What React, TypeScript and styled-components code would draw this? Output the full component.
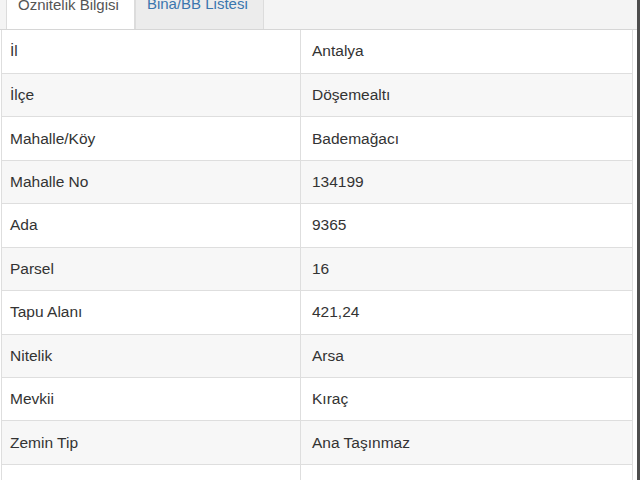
import React, { useState } from 'react'
import styled, { createGlobalStyle } from 'styled-components'

const GlobalStyle = createGlobalStyle`
	html, body {
		margin: 0;
		padding: 0;
		background: #fff;
	}
	body {
		font-family: 'Liberation Sans', Arial, sans-serif;
		color: #333;
	}
`

const rows: [string, string][] = [
	['İl', 'Antalya'],
	['İlçe', 'Döşemealtı'],
	['Mahalle/Köy', 'Bademağacı'],
	['Mahalle No', '134199'],
	['Ada', '9365'],
	['Parsel', '16'],
	['Tapu Alanı', '421,24'],
	['Nitelik', 'Arsa'],
	['Mevkii', 'Kıraç'],
	['Zemin Tip', 'Ana Taşınmaz'],
	['Sıfat', ''],
]

const tabs = ['Öznitelik Bilgisi', 'Bina/BB Listesi']

const App: React.FC = () => {
	const [active, setActive] = useState(0)

	return (
		<Page>
			<GlobalStyle />
			<TabBar>
				{tabs.map((t, i) => (
					<Tab key={t} $active={i === active} onClick={() => setActive(i)}>
						{t}
					</Tab>
				))}
			</TabBar>
			<Table>
				<colgroup>
					<KeyCol />
					<col />
				</colgroup>
				<tbody>
					{rows.map(([k, v], i) => (
						<Row key={k} $striped={i % 2 === 1}>
							<KeyCell>{k}</KeyCell>
							<ValueCell>{v}</ValueCell>
						</Row>
					))}
				</tbody>
			</Table>
		</Page>
	)
}

export default App

const Page = styled.div`
	width: 637px;
	height: 480px;
	overflow: hidden;
	border-right: 3px solid #4d4d4d;
	background: #fff;
`

const TabBar = styled.div`
	display: flex;
	align-items: flex-end;
	height: 29px;
	padding-left: 6px;
	background: #f4f4f4;
	border-bottom: 1px solid #d6d6d6;
	overflow: hidden;
`

const Tab = styled.div<{ $active: boolean }>`
	flex-shrink: 0;
	height: 36px;
	margin-bottom: ${p => (p.$active ? '-1px' : '0')};
	padding: 0 15px 0 11px;
	box-sizing: border-box;
	font-size: 15px;
	line-height: 20px;
	cursor: pointer;
	background: ${p => (p.$active ? '#fff' : '#ececec')};
	color: ${p => (p.$active ? '#555' : '#3a76ae')};
	border: 1px solid #dcdcdc;
	border-bottom: ${p => (p.$active ? '1px solid #fff' : 'none')};
`

const Table = styled.table`
	width: 632px;
	margin-left: 1px;
	border-collapse: collapse;
	table-layout: fixed;
	font-size: 15.5px;
	color: #333;
`

const KeyCol = styled.col`
	width: 299px;
`

const Row = styled.tr<{ $striped: boolean }>`
	height: 43.44px;
	background: ${p => (p.$striped ? '#f7f7f7' : '#fff')};
`

const KeyCell = styled.td`
	padding: 0 8px;
	border: 1px solid #dedede;
	border-top: none;
	vertical-align: middle;
	white-space: nowrap;
`

const ValueCell = styled.td`
	padding: 0 11px;
	border: 1px solid #dedede;
	border-top: none;
	vertical-align: middle;
	white-space: nowrap;
`
